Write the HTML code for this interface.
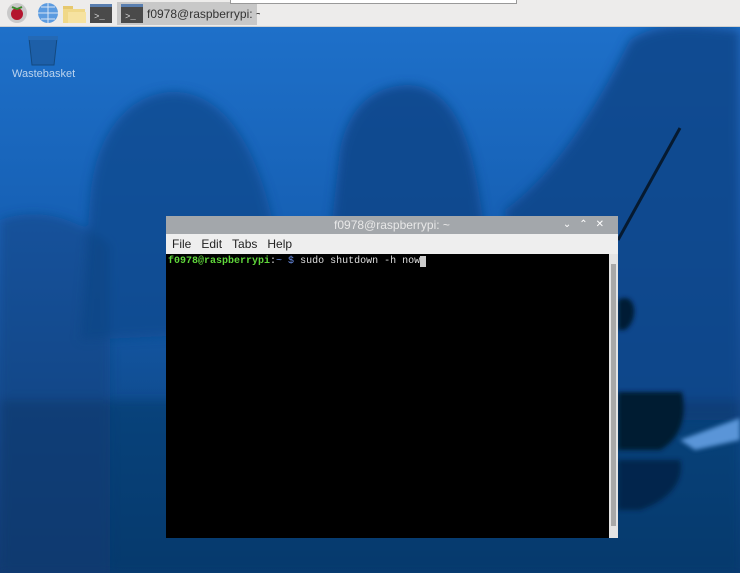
<!DOCTYPE html>
<html><head><style>
body{margin:0;width:740px;height:573px;overflow:hidden;position:relative;font-family:"Liberation Sans",sans-serif;background:#0d3f7c}
svg.bg{position:absolute;left:0;top:0}
.bar{position:absolute;left:0;top:0;width:740px;height:26px;background:#edeceb;border-bottom:1px solid #d0d0d0}
.win{position:absolute;left:166px;top:216px;width:452px;height:322px;background:#000}
.title{position:absolute;left:0;top:0;width:452px;height:18px;background:#a3a7ab;color:#e8e8e8;font-size:12px;text-align:center;line-height:18px}
.menu{position:absolute;left:0;top:18px;width:452px;height:20px;background:#eeeeee;font-size:12px;line-height:20px;color:#222}
.menu span{margin-left:6px;margin-right:4px}
.term{position:absolute;left:2px;top:39px;font-family:"Liberation Mono",monospace;font-size:10px;line-height:14px;color:#ddd;white-space:pre}
.sb{position:absolute;right:0;top:38px;width:9px;height:284px;background:#e4e4e4}
.sb div{position:absolute;left:2px;top:10px;width:5px;height:262px;background:#a8a8a8}
</style></head><body>
<svg class="bg" width="740" height="573">
<defs>
<linearGradient id="s" x1="0" y1="0" x2="0" y2="1"><stop offset="0" stop-color="#1f72cc"/><stop offset="0.4" stop-color="#1660b4"/><stop offset="0.75" stop-color="#0f4a8c"/><stop offset="1" stop-color="#0c3c74"/></linearGradient>
<filter id="b" x="-20%" y="-20%" width="140%" height="140%"><feGaussianBlur stdDeviation="5"/></filter>
<filter id="b2"><feGaussianBlur stdDeviation="2"/></filter>
</defs>
<rect width="740" height="573" fill="url(#s)"/>
<g filter="url(#b)">
<path d="M90 200 C95 130 130 95 170 92 C215 90 250 130 270 210 L300 330 L80 340 Z" fill="#124a8e" opacity="0.8"/>
<path d="M340 150 C350 100 380 85 410 85 C450 88 470 130 480 200 L500 320 L320 330 Z" fill="#114688" opacity="0.85"/>
<path d="M505 210 C560 170 600 100 630 40 C660 20 700 25 740 30 L740 420 L520 420 Z" fill="#114788" opacity="0.85"/>
<path d="M0 220 C40 205 80 220 110 245 L110 573 L0 573 Z" fill="#0f4280" opacity="0.5"/>
<rect x="0" y="400" width="740" height="173" fill="#0b3566" opacity="0.5"/>
</g>
<g filter="url(#b2)">
<path d="M618 300 C636 290 640 320 625 330 L618 330 Z" fill="#061c36"/>
<path d="M618 392 L682 392 C688 420 678 440 660 450 L618 450 Z" fill="#061a33"/>
<path d="M618 460 L680 460 C685 480 670 500 640 510 L618 510 Z" fill="#071f3d" opacity="0.7"/>
<path d="M680 440 L740 418 L740 440 L695 450 Z" fill="#5a95d8"/>
</g>
<path d="M618 240 L680 128" stroke="#061a30" stroke-width="3"/>
</svg>
<div class="bar">
<svg width="260" height="26" style="position:absolute;left:0;top:0">
<circle cx="17" cy="13" r="10" fill="#c9c9c9"/><circle cx="17" cy="14" r="6" fill="#b4152e"/><path d="M12 7 L17 9 L22 7" stroke="#3c8a2c" stroke-width="2" fill="none"/>
<circle cx="48" cy="13" r="10" fill="#5b9be0"/><path d="M38 13 H58 M48 3 V23 M41 7 H55 M41 19 H55" stroke="#d8e6f5" stroke-width="1"/>
<rect x="63" y="6" width="10" height="4" fill="#e6c86e"/><rect x="63" y="9" width="22" height="14" fill="#f0d888"/><rect x="68" y="12" width="18" height="11" fill="#f6e2a0"/>
<rect x="90" y="4" width="22" height="19" fill="#4a4a4a"/><rect x="90" y="4" width="22" height="3" fill="#5a7fb0"/><text x="94" y="19" font-size="9" fill="#ddd" font-family="Liberation Mono">&gt;_</text>
<rect x="117" y="2" width="140" height="23" fill="#c8c8c8"/>
<rect x="121" y="4" width="22" height="19" fill="#4a4a4a"/><rect x="121" y="4" width="22" height="3" fill="#5a7fb0"/><text x="125" y="19" font-size="9" fill="#ddd" font-family="Liberation Mono">&gt;_</text>
<text x="147" y="18" font-size="12" fill="#333" font-family="Liberation Sans">f0978@raspberrypi: ~</text>
</svg>
<div style="position:absolute;left:230px;top:0;width:285px;height:3px;border:1px solid #999;border-top:none;background:#fff"></div>
</div>
<svg width="40" height="32" style="position:absolute;left:27px;top:35px"><path d="M2 3 H30 L27 30 H5 Z" fill="#1d5fa8" stroke="#14497f"/><rect x="1" y="1" width="30" height="4" fill="#2469b5"/></svg>
<div style="position:absolute;left:12px;top:68px;font-size:11px;color:#bcd4ee">Wastebasket</div>
<div class="win">
<div class="title">f0978@raspberrypi: ~<span style="position:absolute;right:6px;top:0;font-size:10px;color:#fff;letter-spacing:8px">⌄⌃✕</span></div>
<div class="menu"><span>File</span><span>Edit</span><span>Tabs</span><span>Help</span></div>
<div class="term"><b style="color:#5fd53a">f0978@raspberrypi</b>:<span style="color:#6b8fe8">~ $</span> sudo shutdown -h now<span style="background:#ccc"> </span></div>
<div class="sb"><div></div></div>
</div>
</body></html>
